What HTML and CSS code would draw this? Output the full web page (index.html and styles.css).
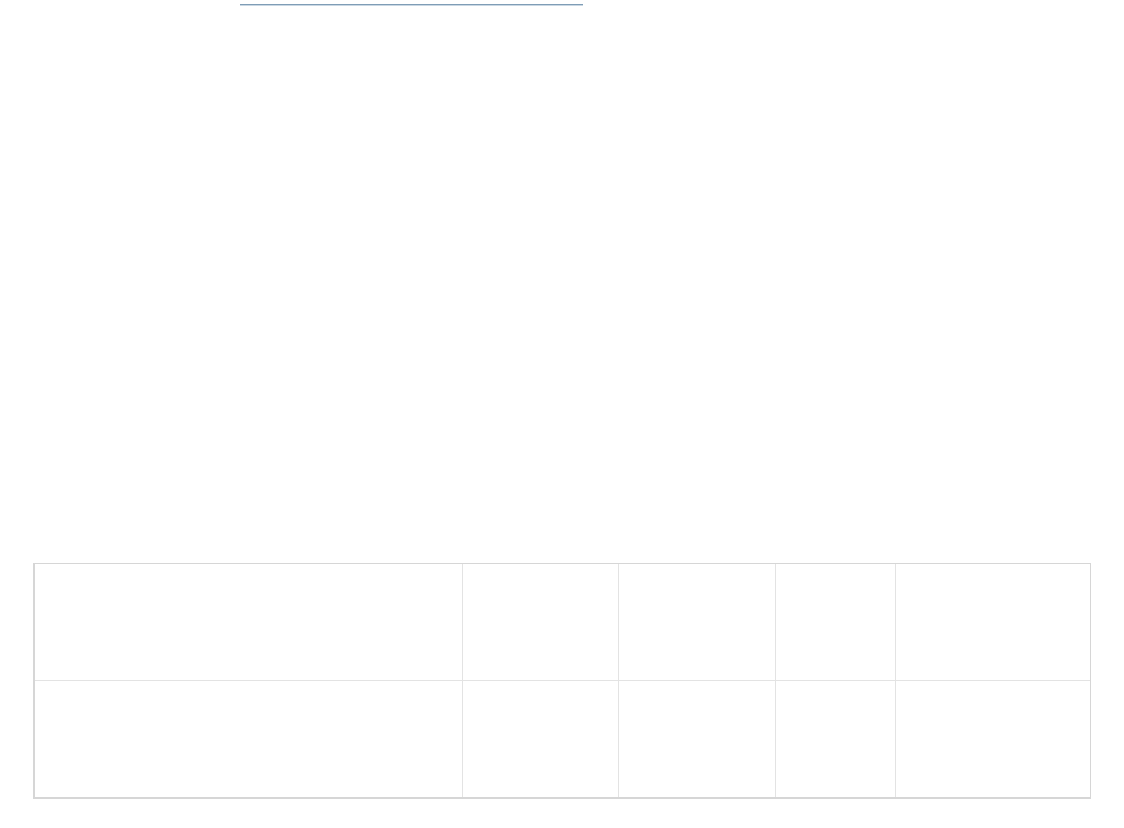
FILE: index.html
```html
<!doctype html>
<html lang="en">
  <head>
    <meta charset="UTF-8" />
    <meta name="viewport" content="width=device-width, initial-scale=1.0" />
    <title>Table</title>
    <link rel="stylesheet" href="styles.css">
  </head>
  <body>
    <div class="page">
      <!-- thin rule under the (scrolled away) header -->
      <div class="rule"></div>

      <div class="grid">
        <div class="cell"></div>
        <div class="cell"></div>
        <div class="cell"></div>
        <div class="cell"></div>
        <div class="cell last"></div>
        <div class="cell bottom"></div>
        <div class="cell bottom"></div>
        <div class="cell bottom"></div>
        <div class="cell bottom"></div>
        <div class="cell bottom last"></div>
      </div>
    </div>
  </body>
</html>
```

FILE: styles.css
```css
:root {
  --rule-color: #7f9db6;
  --rule-light: #c9d7e3;
  --outer-border: #d6d6d6;
  --inner-border: #e3e3e3;
}

body {
  margin: 0;
  background: #fff;
  font-family: "Liberation Sans", Arial, sans-serif;
}

.page {
  padding-top: 4px;
}

.rule {
  margin-left: 240px;
  width: 343px;
  height: 1px;
  background: var(--rule-color);
  border-bottom: 1px solid var(--rule-light);
}

/* Empty data grid */
.grid {
  margin: 557px 0 0 33px;
  width: 1058px;
  box-sizing: border-box;
  display: grid;
  grid-template-columns: 428px 156px 157px 120px 194px;
  grid-template-rows: 117px 116px;
  border-top: 1px solid var(--outer-border);
  border-left: 2px solid var(--outer-border);
  border-right: 1px solid var(--outer-border);
  border-bottom: 2px solid var(--outer-border);
}

.cell {
  border-right: 1px solid var(--inner-border);
  border-bottom: 1px solid var(--inner-border);
}

.cell.last {
  border-right: none;
}

.cell.bottom {
  border-bottom: none;
}
```
